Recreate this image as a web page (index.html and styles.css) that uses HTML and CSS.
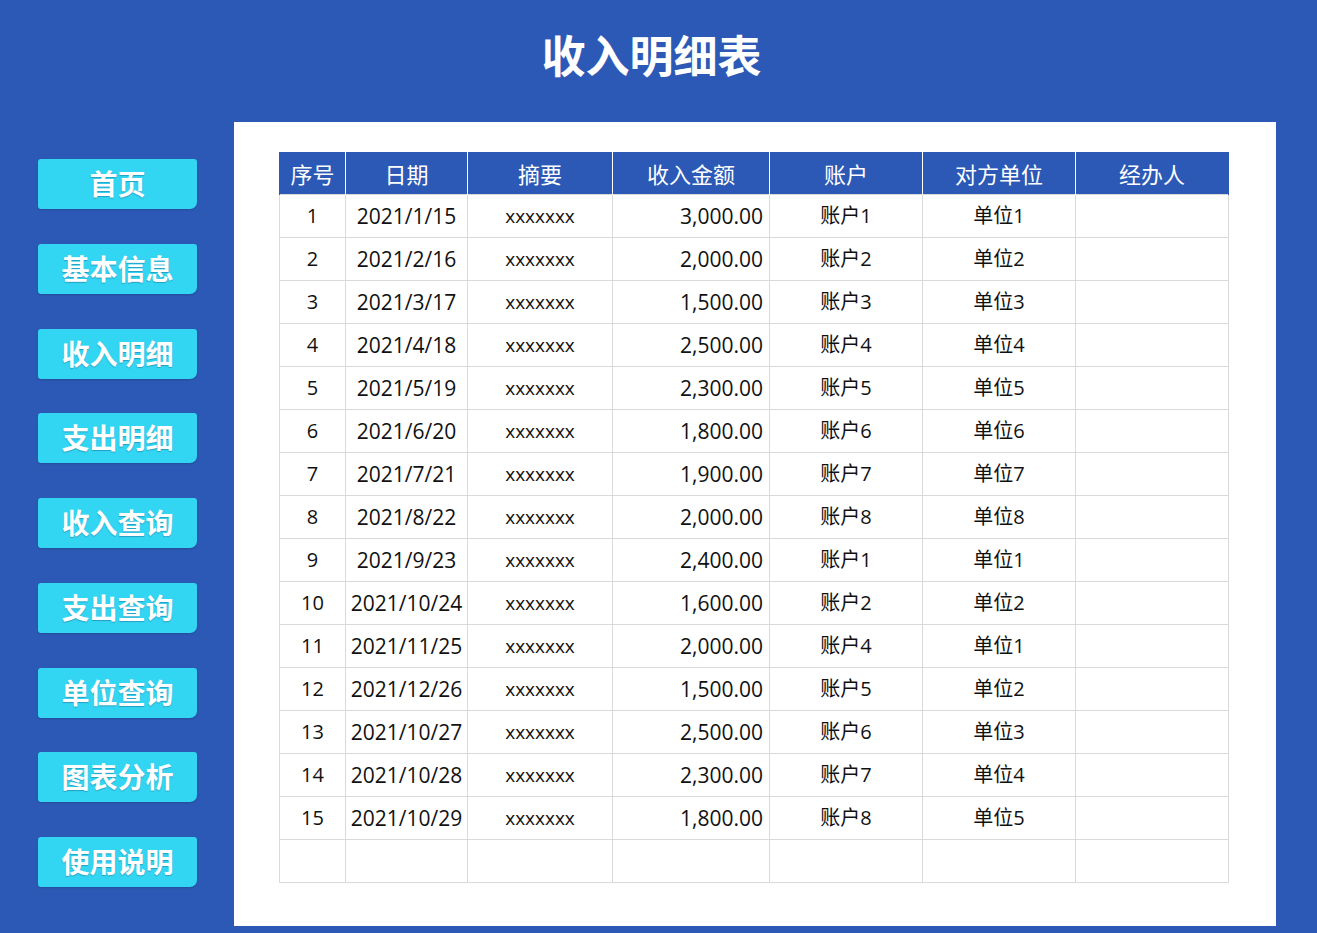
FILE: index.html
```html
<!DOCTYPE html>
<html lang="zh">
<head>
<meta charset="utf-8">
<link rel="stylesheet" href="styles.css">
</head>
<body>
<header class="top"><h1 class="title">收入明细表</h1></header>
<div class="main">
  <nav class="side">
    <div class="btn">首页</div>
    <div class="btn">基本信息</div>
    <div class="btn">收入明细</div>
    <div class="btn">支出明细</div>
    <div class="btn">收入查询</div>
    <div class="btn">支出查询</div>
    <div class="btn">单位查询</div>
    <div class="btn">图表分析</div>
    <div class="btn">使用说明</div>
  </nav>
  <section class="panel">
    <table class="grid">
      <colgroup>
        <col class="c1"><col class="c2"><col class="c3"><col class="c4"><col class="c5"><col class="c6"><col class="c7">
      </colgroup>
      <thead>
        <tr><th>序号</th><th>日期</th><th>摘要</th><th>收入金额</th><th>账户</th><th>对方单位</th><th>经办人</th></tr>
      </thead>
      <tbody>
        <tr><td>1</td><td class="d">2021/1/15</td><td class="x">xxxxxxx</td><td class="amt">3,000.00</td><td>账户1</td><td>单位1</td><td></td></tr>
        <tr><td>2</td><td class="d">2021/2/16</td><td class="x">xxxxxxx</td><td class="amt">2,000.00</td><td>账户2</td><td>单位2</td><td></td></tr>
        <tr><td>3</td><td class="d">2021/3/17</td><td class="x">xxxxxxx</td><td class="amt">1,500.00</td><td>账户3</td><td>单位3</td><td></td></tr>
        <tr><td>4</td><td class="d">2021/4/18</td><td class="x">xxxxxxx</td><td class="amt">2,500.00</td><td>账户4</td><td>单位4</td><td></td></tr>
        <tr><td>5</td><td class="d">2021/5/19</td><td class="x">xxxxxxx</td><td class="amt">2,300.00</td><td>账户5</td><td>单位5</td><td></td></tr>
        <tr><td>6</td><td class="d">2021/6/20</td><td class="x">xxxxxxx</td><td class="amt">1,800.00</td><td>账户6</td><td>单位6</td><td></td></tr>
        <tr><td>7</td><td class="d">2021/7/21</td><td class="x">xxxxxxx</td><td class="amt">1,900.00</td><td>账户7</td><td>单位7</td><td></td></tr>
        <tr><td>8</td><td class="d">2021/8/22</td><td class="x">xxxxxxx</td><td class="amt">2,000.00</td><td>账户8</td><td>单位8</td><td></td></tr>
        <tr><td>9</td><td class="d">2021/9/23</td><td class="x">xxxxxxx</td><td class="amt">2,400.00</td><td>账户1</td><td>单位1</td><td></td></tr>
        <tr><td>10</td><td class="d">2021/10/24</td><td class="x">xxxxxxx</td><td class="amt">1,600.00</td><td>账户2</td><td>单位2</td><td></td></tr>
        <tr><td>11</td><td class="d">2021/11/25</td><td class="x">xxxxxxx</td><td class="amt">2,000.00</td><td>账户4</td><td>单位1</td><td></td></tr>
        <tr><td>12</td><td class="d">2021/12/26</td><td class="x">xxxxxxx</td><td class="amt">1,500.00</td><td>账户5</td><td>单位2</td><td></td></tr>
        <tr><td>13</td><td class="d">2021/10/27</td><td class="x">xxxxxxx</td><td class="amt">2,500.00</td><td>账户6</td><td>单位3</td><td></td></tr>
        <tr><td>14</td><td class="d">2021/10/28</td><td class="x">xxxxxxx</td><td class="amt">2,300.00</td><td>账户7</td><td>单位4</td><td></td></tr>
        <tr><td>15</td><td class="d">2021/10/29</td><td class="x">xxxxxxx</td><td class="amt">1,800.00</td><td>账户8</td><td>单位5</td><td></td></tr>
        <tr><td></td><td></td><td></td><td></td><td></td><td></td><td></td></tr>
      </tbody>
    </table>
  </section>
</div>
</body>
</html>
```
FILE: styles.css
```css
html, body {
  margin: 0;
  padding: 0;
}
body {
  background: #2b59b5;
  font-family: "Noto Sans CJK SC", "Noto Sans", sans-serif;
  width: 1317px;
  height: 933px;
  overflow: hidden;
}
.top {
  height: 122px;
  display: flex;
  justify-content: center;
  padding-right: 14px;
  box-sizing: border-box;
}
.title {
  margin: 22px 0 0 0;
  color: #ffffff;
  font-size: 44px;
  font-weight: 700;
  line-height: 64px;
}
.main {
  display: flex;
}
.side {
  width: 234px;
  box-sizing: border-box;
  padding: 37px 0 0 38px;
  display: flex;
  flex-direction: column;
  gap: 34.75px;
}
.btn {
  width: 159px;
  height: 50px;
  background: #33d6f2;
  border-radius: 3px 3px 7px 3px;
  color: #ffffff;
  font-size: 28px;
  font-weight: 700;
  line-height: 48px;
  text-align: center;
  text-shadow: 0 1px 1px rgba(0, 60, 110, 0.35);
  box-shadow: 0 1px 2px rgba(0, 0, 0, 0.15);
}
.panel {
  width: 1042px;
  height: 804px;
  background: #ffffff;
  box-sizing: border-box;
  padding: 30px 0 0 45px;
}
.grid {
  border-collapse: collapse;
  table-layout: fixed;
  width: 949px;
}
.c1 { width: 66px; }
.c2 { width: 122px; }
.c3 { width: 145px; }
.c4 { width: 157px; }
.c5 { width: 153px; }
.c6 { width: 153px; }
.c7 { width: 153px; }
.grid th {
  background: #2b59b5;
  color: #ffffff;
  font-weight: 400;
  font-size: 22px;
  height: 42px;
  padding: 0;
  border: 1px solid #ffffff;
  border-top: none;
  border-bottom: none;
  line-height: 42px;
}
.grid th:first-child { border-left: 1px solid #2b59b5; }
.grid th:last-child { border-right: 1px solid #2b59b5; }
.grid td {
  height: 42px;
  padding: 0;
  border: 1px solid #d9d9d9;
  text-align: center;
  font-family: "Open Sans", "Noto Sans CJK SC", sans-serif;
  font-size: 20px;
  color: #111111;
  line-height: 42px;
  white-space: nowrap;
}
.grid td.d {
  font-size: 21px;
}
.grid td.x {
  font-size: 19px;
}
.grid td.amt {
  text-align: right;
  padding-right: 6px;
  font-size: 21px;
}
```
